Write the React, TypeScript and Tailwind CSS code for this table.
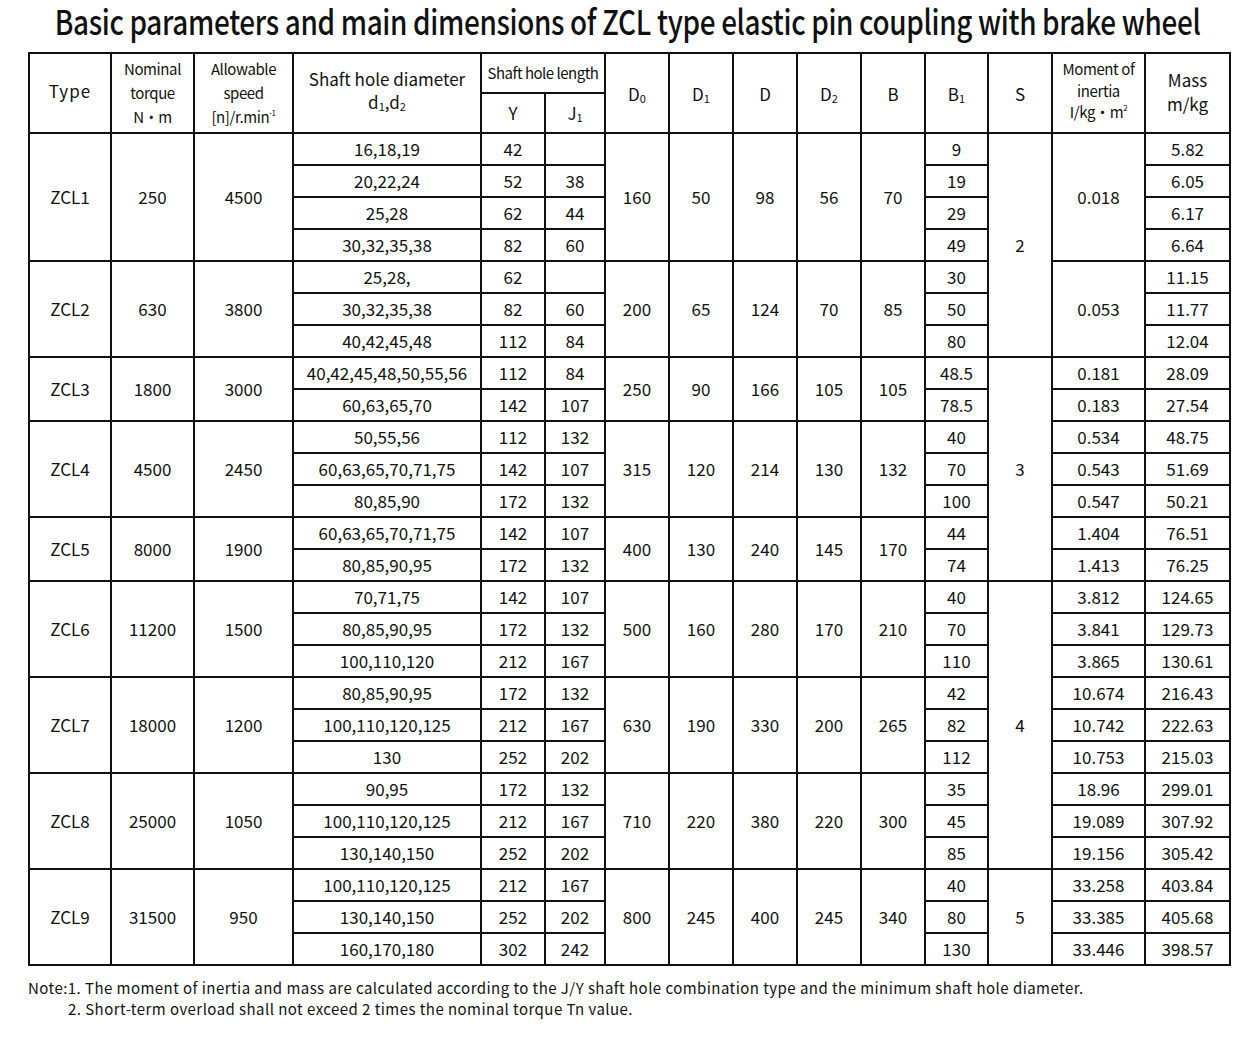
import React from 'react';

type Row = string[]; // [diameter, Y, J1, B1, inertia?, mass]

interface Group {
  type: string;
  torque: string;
  speed: string;
  d0: string;
  d1: string;
  d: string;
  d2: string;
  b: string;
  inertia?: string; // one value for the whole group
  rows: Row[];
}

const groups: Group[] = [
  {
    type: 'ZCL1', torque: '250', speed: '4500', d0: '160', d1: '50', d: '98', d2: '56', b: '70', inertia: '0.018',
    rows: [
      ['16,18,19', '42', '', '9', '5.82'],
      ['20,22,24', '52', '38', '19', '6.05'],
      ['25,28', '62', '44', '29', '6.17'],
      ['30,32,35,38', '82', '60', '49', '6.64'],
    ],
  },
  {
    type: 'ZCL2', torque: '630', speed: '3800', d0: '200', d1: '65', d: '124', d2: '70', b: '85', inertia: '0.053',
    rows: [
      ['25,28,', '62', '', '30', '11.15'],
      ['30,32,35,38', '82', '60', '50', '11.77'],
      ['40,42,45,48', '112', '84', '80', '12.04'],
    ],
  },
  {
    type: 'ZCL3', torque: '1800', speed: '3000', d0: '250', d1: '90', d: '166', d2: '105', b: '105',
    rows: [
      ['40,42,45,48,50,55,56', '112', '84', '48.5', '0.181', '28.09'],
      ['60,63,65,70', '142', '107', '78.5', '0.183', '27.54'],
    ],
  },
  {
    type: 'ZCL4', torque: '4500', speed: '2450', d0: '315', d1: '120', d: '214', d2: '130', b: '132',
    rows: [
      ['50,55,56', '112', '132', '40', '0.534', '48.75'],
      ['60,63,65,70,71,75', '142', '107', '70', '0.543', '51.69'],
      ['80,85,90', '172', '132', '100', '0.547', '50.21'],
    ],
  },
  {
    type: 'ZCL5', torque: '8000', speed: '1900', d0: '400', d1: '130', d: '240', d2: '145', b: '170',
    rows: [
      ['60,63,65,70,71,75', '142', '107', '44', '1.404', '76.51'],
      ['80,85,90,95', '172', '132', '74', '1.413', '76.25'],
    ],
  },
  {
    type: 'ZCL6', torque: '11200', speed: '1500', d0: '500', d1: '160', d: '280', d2: '170', b: '210',
    rows: [
      ['70,71,75', '142', '107', '40', '3.812', '124.65'],
      ['80,85,90,95', '172', '132', '70', '3.841', '129.73'],
      ['100,110,120', '212', '167', '110', '3.865', '130.61'],
    ],
  },
  {
    type: 'ZCL7', torque: '18000', speed: '1200', d0: '630', d1: '190', d: '330', d2: '200', b: '265',
    rows: [
      ['80,85,90,95', '172', '132', '42', '10.674', '216.43'],
      ['100,110,120,125', '212', '167', '82', '10.742', '222.63'],
      ['130', '252', '202', '112', '10.753', '215.03'],
    ],
  },
  {
    type: 'ZCL8', torque: '25000', speed: '1050', d0: '710', d1: '220', d: '380', d2: '220', b: '300',
    rows: [
      ['90,95', '172', '132', '35', '18.96', '299.01'],
      ['100,110,120,125', '212', '167', '45', '19.089', '307.92'],
      ['130,140,150', '252', '202', '85', '19.156', '305.42'],
    ],
  },
  {
    type: 'ZCL9', torque: '31500', speed: '950', d0: '800', d1: '245', d: '400', d2: '245', b: '340',
    rows: [
      ['100,110,120,125', '212', '167', '40', '33.258', '403.84'],
      ['130,140,150', '252', '202', '80', '33.385', '405.68'],
      ['160,170,180', '302', '242', '130', '33.446', '398.57'],
    ],
  },
];

// S column: start row index (0-based over all data rows) -> [span, value]
const sSpans: Record<number, [number, string]> = {
  0: [7, '2'],
  7: [7, '3'],
  14: [9, '4'],
  23: [3, '5'],
};

const rowSpan: Record<number, string> = {
  1: '',
  2: 'row-span-2',
  3: 'row-span-3',
  4: 'row-span-4',
  7: 'row-span-7',
  9: 'row-span-9',
};

function Cell({ span = 1, className = '', children }: { span?: number; className?: string; children?: React.ReactNode }) {
  return (
    <div className={`${rowSpan[span]} bg-white flex items-center justify-center text-center ${className}`}>
      {children}
    </div>
  );
}

// header cells take both header rows
function Head({ className = 'leading-[23px]', children }: { className?: string; children?: React.ReactNode }) {
  return (
    <Cell span={2} className={`flex-col ${className}`}>
      {children}
    </Cell>
  );
}

const Sub = ({ children }: { children: React.ReactNode }) => (
  <sub className="text-[11px] bottom-[-0.2em]">{children}</sub>
);

export default function App() {
  const cells: React.ReactNode[] = [];
  let rowIndex = 0;

  groups.forEach((g) => {
    const n = g.rows.length;
    g.rows.forEach((r, i) => {
      const k = `${g.type}-${i}`;
      if (i === 0) {
        cells.push(<Cell key={k + 't'} span={n}>{g.type}</Cell>);
        cells.push(<Cell key={k + 'q'} span={n}>{g.torque}</Cell>);
        cells.push(<Cell key={k + 's'} span={n}>{g.speed}</Cell>);
      }
      cells.push(<Cell key={k + 'dia'}>{r[0]}</Cell>);
      cells.push(<Cell key={k + 'y'}>{r[1]}</Cell>);
      cells.push(<Cell key={k + 'j'}>{r[2]}</Cell>);
      if (i === 0) {
        cells.push(<Cell key={k + 'd0'} span={n}>{g.d0}</Cell>);
        cells.push(<Cell key={k + 'd1'} span={n}>{g.d1}</Cell>);
        cells.push(<Cell key={k + 'd'} span={n}>{g.d}</Cell>);
        cells.push(<Cell key={k + 'd2'} span={n}>{g.d2}</Cell>);
        cells.push(<Cell key={k + 'b'} span={n}>{g.b}</Cell>);
      }
      cells.push(<Cell key={k + 'b1'}>{r[3]}</Cell>);
      const s = sSpans[rowIndex];
      if (s) cells.push(<Cell key={k + 'S'} span={s[0]}>{s[1]}</Cell>);
      if (g.inertia) {
        if (i === 0) cells.push(<Cell key={k + 'in'} span={n}>{g.inertia}</Cell>);
        cells.push(<Cell key={k + 'm'}>{r[4]}</Cell>);
      } else {
        cells.push(<Cell key={k + 'in'}>{r[4]}</Cell>);
        cells.push(<Cell key={k + 'm'}>{r[5]}</Cell>);
      }
      rowIndex++;
    });
  });

  return (
    <div className="w-[1255px] h-[1040px] bg-white text-[#111] font-['Noto_Sans_CJK_SC','Noto_Sans',sans-serif]">
      <div className="h-[52px] pt-[1px]">
        <h1 className="mx-auto w-[1143px] flex justify-center text-[34px] leading-[40px] font-medium">
          <span className="shrink-0 whitespace-nowrap tracking-[-0.4px] scale-x-[0.82]">
            Basic parameters and main dimensions of ZCL type elastic pin coupling with brake wheel
          </span>
        </h1>
      </div>

      <div className="ml-[28px] w-[1203px] p-[2px] bg-[#111] grid gap-[2px] grid-cols-[80px_81px_97px_186px_62px_58px_62px_62px_62px_62px_62px_61px_62px_91px_83px] grid-rows-[38px_38px_repeat(26,30px)] text-[17px]">
        <Head className="leading-[23px] pb-[5px] tracking-[1px]">Type</Head>
        <Head className="leading-[24px] text-[15px] tracking-[-0.4px]">
          <span>Nominal</span>
          <span>torque</span>
          <span>N•m</span>
        </Head>
        <Head className="leading-[24px] text-[15px] tracking-[-0.4px]">
          <span>Allowable</span>
          <span>speed</span>
          <span>
            [n]/r.min<sup className="text-[8px] top-[-0.9em]">-1</sup>
          </span>
        </Head>
        <Head className="leading-[23px] pb-[6px]">
          <span>Shaft hole diameter</span>
          <span>
            d<Sub>1</Sub>,d<Sub>2</Sub>
          </span>
        </Head>
        <Cell className="col-span-2 text-[15px] tracking-[-0.5px]">Shaft hole length</Cell>
        <Head>
          <span>
            D<Sub>0</Sub>
          </span>
        </Head>
        <Head>
          <span>
            D<Sub>1</Sub>
          </span>
        </Head>
        <Head>D</Head>
        <Head>
          <span>
            D<Sub>2</Sub>
          </span>
        </Head>
        <Head>B</Head>
        <Head>
          <span>
            B<Sub>1</Sub>
          </span>
        </Head>
        <Head>S</Head>
        <Head className="leading-[21.5px] pb-[5px] text-[15px] tracking-[-0.4px]">
          <span>Moment of</span>
          <span>inertia</span>
          <span>
            I/kg•m<sup className="text-[8px] top-[-0.9em]">2</sup>
          </span>
        </Head>
        <Head className="leading-[24px] pb-[2px]">
          <span>Mass</span>
          <span>m/kg</span>
        </Head>
        <Cell>Y</Cell>
        <Cell>
          <span>
            J<Sub>1</Sub>
          </span>
        </Cell>
        {cells}
      </div>

      <div className="mt-[11px] ml-[28px] text-[15px] leading-[21px] tracking-[0.45px]">
        <p>Note:1. The moment of inertia and mass are calculated according to the J/Y shaft hole combination type and the minimum shaft hole diameter.</p>
        <p className="pl-[40px]">2. Short-term overload shall not exceed 2 times the nominal torque Tn value.</p>
      </div>
    </div>
  );
}
